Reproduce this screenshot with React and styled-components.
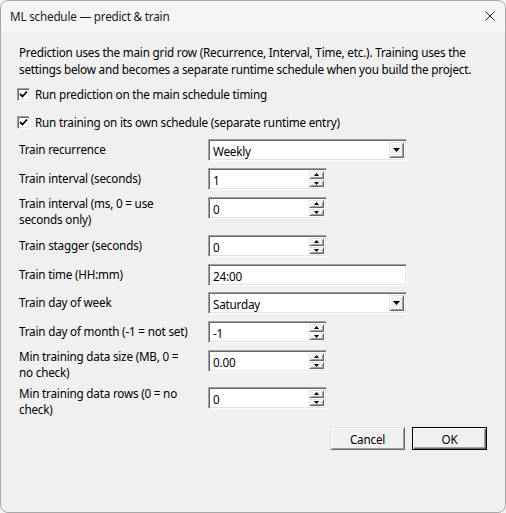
import React from 'react';
import styled, { createGlobalStyle, css } from 'styled-components';

const GlobalStyle = createGlobalStyle`
  html, body {
    margin: 0;
    padding: 0;
    background: #f4f4f4;
  }
  body {
    font-family: "Noto Sans", "Open Sans", sans-serif;
    font-size: 11.7px;
    letter-spacing: -0.2px;
    color: #000;
  }
`;

// bordes clasicos de windows
const sunken = css`
  box-sizing: border-box;
  border: 1px solid;
  border-color: #a0a0a0 #ffffff #ffffff #a0a0a0;
  box-shadow: inset 1px 1px 0 #696969, inset -1px -1px 0 #e3e3e3;
  background: #fff;
`;

const raised = css`
  box-sizing: border-box;
  border: 1px solid;
  border-color: #e3e3e3 #696969 #696969 #e3e3e3;
  box-shadow: inset 1px 1px 0 #ffffff, inset -1px -1px 0 #a0a0a0;
  background: #f0f0f0;
`;

const Window = styled.div`
  width: 506px;
  height: 513px;
  box-sizing: border-box;
  border: 1px solid #a8a8a8;
  border-radius: 8px;
  overflow: hidden;
  background: #f0f0f0;
  display: flex;
  flex-direction: column;
`;

const TitleBar = styled.div`
  height: 30px;
  flex-shrink: 0;
  display: flex;
  align-items: center;
  justify-content: space-between;
  padding: 0 10px 0 9px;
  background: #f5f5f5;
`;

const Title = styled.span`
  color: #1a1a1a;
`;

const CloseButton = styled.span`
  display: flex;
  width: 10px;
  height: 10px;
  margin-top: -1px;
`;

const Body = styled.div`
  padding: 13px 18px 0 17px;
  display: flex;
  flex-direction: column;
`;

const Intro = styled.p`
  margin: 0 0 0 1px;
  line-height: 17px;
  white-space: nowrap;
`;

const CheckRow = styled.label`
  display: flex;
  align-items: center;
  gap: 5px;
  height: 16px;
  margin-top: ${(p) => p.$top}px;
`;

const CheckBox = styled.span`
  ${sunken};
  width: 13px;
  height: 13px;
  display: flex;
  align-items: center;
  justify-content: center;
  margin-left: -1px;
`;

const Form = styled.div`
  margin-top: 9px;
  display: flex;
  flex-direction: column;
`;

const FieldRow = styled.div`
  display: flex;
  align-items: flex-start;
  height: ${(p) => p.$h}px;
`;

const Label = styled.div`
  width: 190px;
  flex-shrink: 0;
  line-height: 16px;
  padding-left: 1px;
  box-sizing: border-box;
  white-space: nowrap;
  margin-top: ${(p) => (p.$tall ? -2 : 2)}px;
`;

const Field = styled.div`
  ${sunken};
  width: ${(p) => p.$w}px;
  height: 22px;
  display: flex;
  align-items: stretch;
  padding: 2px;
`;

const Value = styled.span`
  flex: 1;
  padding-left: 2px;
  line-height: 18px;
`;

const DropButton = styled.span`
  ${raised};
  width: 15px;
  display: flex;
  align-items: center;
  justify-content: center;
`;

const SpinButtons = styled.span`
  display: flex;
  flex-direction: column;
  width: 15px;
  gap: 1px;
`;

const SpinButton = styled.span`
  ${raised};
  flex: 1;
  display: flex;
  align-items: center;
  justify-content: center;
`;

const ButtonBar = styled.div`
  display: flex;
  justify-content: flex-end;
  gap: 7px;
  margin-top: 2px;
`;

const Button = styled.button`
  ${raised};
  width: 75px;
  height: 23px;
  font: inherit;
  letter-spacing: inherit;
  color: #000;
  padding: 0;
  ${(p) =>
    p.$default &&
    css`
      border: 1px solid #000;
      box-shadow: inset 1px 1px 0 #ffffff, inset -1px -1px 0 #696969,
        inset -2px -2px 0 #a0a0a0;
    `}
`;

const Tick = () => (
  <svg width="9" height="9" viewBox="0 0 9 9">
    <path d="M1 4 L3.5 6.5 L8 1.5" fill="none" stroke="#000" strokeWidth="1.8" />
  </svg>
);

const Arrow = ({ up, w = 7, h = 4 }) => (
  <svg width={w} height={h} viewBox={`0 0 ${w} ${h}`}>
    <polygon
      points={up ? `0,${h} ${w},${h} ${w / 2},0` : `0,0 ${w},0 ${w / 2},${h}`}
      fill="#000"
    />
  </svg>
);

const Combo = ({ value }) => (
  <Field $w={199}>
    <Value>{value}</Value>
    <DropButton>
      <Arrow />
    </DropButton>
  </Field>
);

const Spin = ({ value }) => (
  <Field $w={119}>
    <Value>{value}</Value>
    <SpinButtons>
      <SpinButton>
        <Arrow up w={5} h={3} />
      </SpinButton>
      <SpinButton>
        <Arrow w={5} h={3} />
      </SpinButton>
    </SpinButtons>
  </Field>
);

const TextBox = ({ value }) => (
  <Field $w={199}>
    <Value>{value}</Value>
  </Field>
);

const rows = [
  { label: 'Train recurrence', h: 29, control: <Combo value="Weekly" /> },
  { label: 'Train interval (seconds)', h: 29, control: <Spin value="1" /> },
  { label: ['Train interval (ms, 0 = use', 'seconds only)'], h: 38, control: <Spin value="0" /> },
  { label: 'Train stagger (seconds)', h: 29, control: <Spin value="0" /> },
  { label: 'Train time (HH:mm)', h: 28, control: <TextBox value="24:00" /> },
  { label: 'Train day of week', h: 29, control: <Combo value="Saturday" /> },
  { label: 'Train day of month (-1 = not set)', h: 29, control: <Spin value="-1" /> },
  { label: ['Min training data size (MB, 0 =', 'no check)'], h: 37, control: <Spin value="0.00" /> },
  { label: ['Min training data rows (0 = no', 'check)'], h: 38, control: <Spin value="0" /> },
];

const App = () => {
  return (
    <>
      <GlobalStyle />
      <Window>
        <TitleBar>
          <Title>ML schedule — predict &amp; train</Title>
          <CloseButton>
            <svg width="10" height="10" viewBox="0 0 10 10">
              <path d="M0.5 0.5 L9.5 9.5 M9.5 0.5 L0.5 9.5" stroke="#1a1a1a" strokeWidth="1" />
            </svg>
          </CloseButton>
        </TitleBar>
        <Body>
          <Intro>
            Prediction uses the main grid row (Recurrence, Interval, Time, etc.). Training uses the
            <br />
            settings below and becomes a separate runtime schedule when you build the project.
          </Intro>
          <CheckRow $top={8}>
            <CheckBox>
              <Tick />
            </CheckBox>
            Run prediction on the main schedule timing
          </CheckRow>
          <CheckRow $top={12}>
            <CheckBox>
              <Tick />
            </CheckBox>
            Run training on its own schedule (separate runtime entry)
          </CheckRow>
          <Form>
            {rows.map((r, i) => {
              const tall = Array.isArray(r.label);
              return (
                <FieldRow key={i} $h={r.h}>
                  <Label $tall={tall}>
                    {tall ? (
                      <>
                        {r.label[0]}
                        <br />
                        {r.label[1]}
                      </>
                    ) : (
                      r.label
                    )}
                  </Label>
                  {r.control}
                </FieldRow>
              );
            })}
          </Form>
          <ButtonBar>
            <Button>Cancel</Button>
            <Button $default>OK</Button>
          </ButtonBar>
        </Body>
      </Window>
    </>
  );
};

export default App;
